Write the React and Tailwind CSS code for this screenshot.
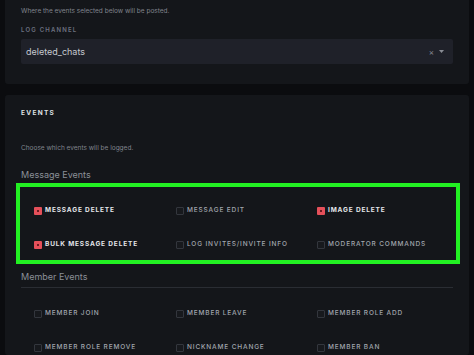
const messageEvents = [
  { label: "MESSAGE DELETE", on: true },
  { label: "MESSAGE EDIT", on: false },
  { label: "IMAGE DELETE", on: true },
  { label: "BULK MESSAGE DELETE", on: true },
  { label: "LOG INVITES/INVITE INFO", on: false },
  { label: "MODERATOR COMMANDS", on: false },
];

const memberEvents = [
  { label: "MEMBER JOIN", on: false },
  { label: "MEMBER LEAVE", on: false },
  { label: "MEMBER ROLE ADD", on: false },
  { label: "MEMBER ROLE REMOVE", on: false },
  { label: "NICKNAME CHANGE", on: false },
  { label: "MEMBER BAN", on: false },
];

const Check = ({ label, on }) => (
  <div className="flex items-center gap-[3px] h-[10px]">
    {on ? (
      <span className="w-[8px] h-[8px] rounded-[1px] bg-[#e5505a] flex items-center justify-center">
        <span className="w-[2px] h-[2px] bg-[#6b1a20]" />
      </span>
    ) : (
      <span className="w-[8px] h-[8px] rounded-[1px] border border-[#33363d] bg-[#17191d]" />
    )}
    <span
      className={
        on
          ? "text-[6.5px] font-bold tracking-[0.13em] text-[#e4e6ea]"
          : "text-[6.5px] font-medium tracking-[0.13em] text-[#a2a6ae]"
      }
    >
      {label}
    </span>
  </div>
);

const Grid = ({ items }) => (
  <div className="grid grid-cols-[142px_141px_1fr] gap-y-[24px]">
    {items.map((it) => (
      <Check key={it.label} {...it} />
    ))}
  </div>
);

const App = () => {
  return (
    <div
      className="h-[355px] overflow-hidden bg-[#0b0c0f] px-[5px] flex flex-col gap-[11px]"
      style={{ fontFamily: "Inter, 'Noto Sans', sans-serif" }}
    >
      <div className="bg-[#14161a] rounded-b-[3px] px-4 pt-[7px] pb-[20px]">
        <p className="text-[6.5px] leading-[8px] text-[#80848d]">
          Where the events selected below will be posted.
        </p>
        <p className="mt-[11px] text-[6px] leading-[8px] font-semibold tracking-[0.2em] text-[#6c7180]">
          LOG CHANNEL
        </p>
        <div className="mt-[5px] h-[25px] bg-[#1f2129] rounded-[2px] flex items-center pl-[5px] pr-[9px]">
          <span className="text-[9px] text-[#c6c9cf] flex-1">deleted_chats</span>
          <span className="text-[8px] text-[#8a8d95] mr-[5px]">×</span>
          <svg width="5" height="3" viewBox="0 0 5 3">
            <path d="M0 0h5L2.5 3z" fill="#8a8d95" />
          </svg>
        </div>
      </div>

      <div className="bg-[#14161a] rounded-[3px] flex-1">
        <p className="px-4 pt-[14px] text-[6.5px] leading-[8px] font-bold tracking-[0.2em] text-[#dfe1e5]">
          EVENTS
        </p>
        <p className="px-4 mt-[27px] text-[6.5px] leading-[8px] text-[#80848d]">
          Choose which events will be logged.
        </p>
        <p className="px-4 mt-[17px] text-[9px] leading-[12px] text-[#8b9098]">
          Message Events
        </p>
        <div className="ml-[11px] mr-[9px] mt-[2px] border-[4px] border-[#22f022] pl-[14px] pt-[19px] pb-[10px]">
          <Grid items={messageEvents} />
        </div>
        <div className="mx-4 mt-[7px] pb-[4px] border-b border-[#2a2d33]">
          <p className="text-[9px] leading-[12px] text-[#8b9098]">Member Events</p>
        </div>
        <div className="pl-[29px] pt-[21px]">
          <Grid items={memberEvents} />
        </div>
      </div>
    </div>
  );
};

export default App;
